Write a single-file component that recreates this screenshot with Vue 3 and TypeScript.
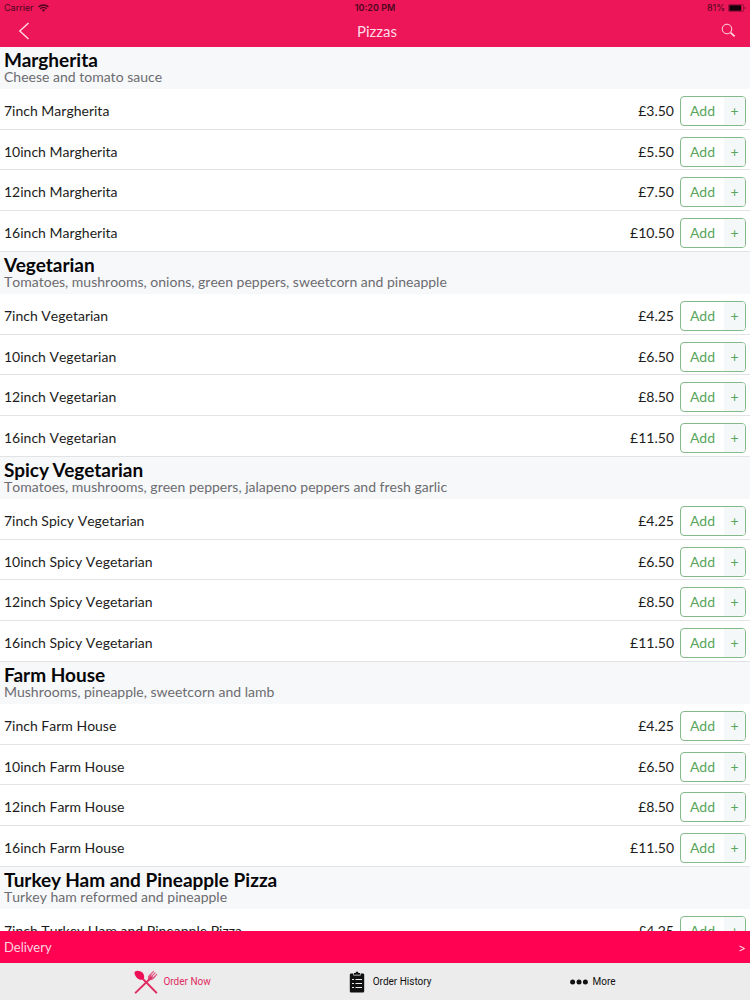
<script setup lang="ts">
interface Item {
  name: string
  price: string
}
interface Section {
  title: string
  description: string
  items: Item[]
}

const sizes = ['7inch', '10inch', '12inch', '16inch']

function section(title: string, description: string, prices: string[]): Section {
  return {
    title,
    description,
    items: prices.map((price, i) => ({ name: `${sizes[i]} ${title}`, price: `£${price}` })),
  }
}

const sections: Section[] = [
  section('Margherita', 'Cheese and tomato sauce', ['3.50', '5.50', '7.50', '10.50']),
  section('Vegetarian', 'Tomatoes, mushrooms, onions, green peppers, sweetcorn and pineapple', ['4.25', '6.50', '8.50', '11.50']),
  section('Spicy Vegetarian', 'Tomatoes, mushrooms, green peppers, jalapeno peppers and fresh garlic', ['4.25', '6.50', '8.50', '11.50']),
  section('Farm House', 'Mushrooms, pineapple, sweetcorn and lamb', ['4.25', '6.50', '8.50', '11.50']),
  {
    title: 'Turkey Ham and Pineapple Pizza',
    description: 'Turkey ham reformed and pineapple',
    items: [{ name: '7inch Turkey Ham and Pineapple Pizza', price: '£4.25' }],
  },
]
</script>

<template>
  <div class="screen">
    <header class="top">
      <div class="status">
        <span class="carrier">
          Carrier
          <svg width="11" height="8" viewBox="0 0 11 8" fill="none" stroke="currentColor" aria-hidden="true">
            <path d="M.6 2.9a7 7 0 0 1 9.8 0M2.3 4.7a4.6 4.6 0 0 1 6.4 0" stroke-width="1.5" />
            <path d="M5.5 7.8 3.8 6.1a2.5 2.5 0 0 1 3.4 0Z" fill="currentColor" stroke="none" />
          </svg>
        </span>
        <span class="time">10:20 PM</span>
        <span class="power">
          81%
          <svg width="18" height="8" viewBox="0 0 18 8" aria-hidden="true">
            <rect x=".4" y=".4" width="15.2" height="7.2" rx="1.5" fill="none" stroke="currentColor" stroke-width=".6" opacity=".6" />
            <rect x="1.3" y="1.2" width="12" height="5.6" rx=".6" fill="currentColor" />
            <path d="M16.6 2.7v2.6q1-.4 1-1.3t-1-1.3Z" fill="currentColor" opacity=".6" />
          </svg>
        </span>
      </div>
      <nav class="bar">
        <button class="icon back" type="button" aria-label="Back">
          <svg width="12" height="18" viewBox="0 0 12 18" fill="none" stroke="currentColor" stroke-width="1.4">
            <path d="M10.5 1 1.8 9l8.7 8" />
          </svg>
        </button>
        <h1>Pizzas</h1>
        <button class="icon search" type="button" aria-label="Search">
          <svg width="15" height="15" viewBox="0 0 15 15" fill="none" stroke="currentColor">
            <circle cx="6" cy="6" r="4.8" stroke-width="1" />
            <path d="m9.6 9.6 4 3.8" stroke-width="1.7" />
          </svg>
        </button>
      </nav>
    </header>

    <main class="menu">
      <section v-for="s in sections" :key="s.title">
        <div class="head">
          <h2>{{ s.title }}</h2>
          <p>{{ s.description }}</p>
        </div>
        <ul>
          <li v-for="item in s.items" :key="item.name">
            <span class="name">{{ item.name }}</span>
            <span class="price">{{ item.price }}</span>
            <button class="add" type="button" :aria-label="`Add ${item.name}`">
              <span class="label">Add</span>
              <span class="plus">+</span>
            </button>
          </li>
        </ul>
      </section>
    </main>

    <button class="delivery" type="button">
      <span>Delivery</span>
      <span class="more">&gt;</span>
    </button>

    <nav class="tabs">
      <a href="#order" class="active" aria-current="page">
        <svg width="24" height="24" viewBox="0 0 24 24" aria-hidden="true">
          <g stroke="currentColor" stroke-width="2" stroke-linecap="round" fill="none">
            <path d="M7.5 7.5 22.3 22.6" />
            <path d="M17 7.8 1.7 22.6" />
          </g>
          <path d="M1 1.4C3-.2 7.4.8 9.2 3.4c1.4 2.2 1.2 4.6.2 5.6s-3.8 1-5.8-.6C1.2 6.4-.4 3 1 1.4Z" fill="#ee1055" />
          <path d="M14.4 9.6c-1-1.8-.6-3.4.6-4.6L19.3.8l.8.7-3 3.6.6.5L21 2.1l.8.8-3.2 3.4.6.6L22.7 3.8l.8.8-3.7 4.2c-1.3 1.2-3 1.9-5.4.8Z" fill="currentColor" opacity=".75" />
        </svg>
        Order Now
      </a>
      <a href="#history">
        <svg class="clip" width="16" height="22" viewBox="0 0 16 22" aria-hidden="true">
          <path d="M2 2.5h2.4v2h7.2v-2H14q1.200 0 1.200 1.200v16.600q0 1.200-1.200 1.200H2q-1.200 0-1.200-1.200V3.700Q.8 2.500 2 2.500Z" fill="currentColor" />
          <path d="M5 3.800V2h1.500q.2-1.600 1.500-1.600T9.500 2H11v1.800Z" fill="currentColor" />
          <path d="M3 8.500h2M3 12.500h2M3 16.500h2M6.500 8.500H13M6.500 12.500H13M6.500 16.500H13" stroke="#ececec" stroke-width="1" />
        </svg>
        Order History
      </a>
      <a href="#more">
        <svg width="18" height="6" viewBox="0 0 18 6" fill="currentColor" aria-hidden="true">
          <circle cx="2.600" cy="3" r="2.500" />
          <circle cx="9" cy="3" r="2.500" />
          <circle cx="15.400" cy="3" r="2.500" />
        </svg>
        More
      </a>
    </nav>
  </div>
</template>

<style>
body {
  margin: 0;
}
</style>

<style scoped>
.screen {
  display: flex;
  flex-direction: column;
  height: 100vh;
  overflow: hidden;
  background: #fff;
  color: #1c1c20;
  font-family: Lato, "Open Sans", sans-serif;
  font-size: 14px;
}
h1,
h2,
p,
ul {
  margin: 0;
  padding: 0;
}
button {
  margin: 0;
  padding: 0;
  border: 0;
  background: none;
  color: inherit;
  font: inherit;
}
svg {
  display: block;
  flex: none;
}
.top {
  flex: none;
  height: 47px;
  background: #ec1658;
}
.status {
  display: grid;
  grid-template-columns: 1fr auto 1fr;
  align-items: center;
  height: 15px;
  padding: 0 4px;
  color: #4c0620;
  font-family: Inter, sans-serif;
  font-size: 9px;
}
.carrier,
.power {
  display: flex;
  align-items: center;
  gap: 4px;
}
.power {
  justify-content: flex-end;
  gap: 3px;
}
.power svg {
  color: #14020a;
}
.time {
  font-weight: 600;
}
.bar {
  display: grid;
  grid-template-columns: 48px 1fr 44px;
  align-items: center;
  height: 31px;
  color: #ffdbe6;
}
.bar h1 {
  text-align: center;
  font-size: 15px;
  font-weight: 400;
  line-height: 20px;
}
.icon {
  display: flex;
  align-items: center;
  justify-content: center;
  height: 31px;
}
.menu {
  flex: 1;
  min-height: 0;
  overflow: hidden;
}
.head {
  box-sizing: border-box;
  height: 42px;
  padding: 3px 4px 0;
  background: #f7f8fa;
}
h2 {
  color: #060608;
  font-size: 19px;
  font-weight: 700;
  line-height: 20px;
}
.head p {
  color: #6c6c70;
  font-size: 14px;
  line-height: 14px;
}
.head p,
.name,
.bar h1 {
  font-kerning: none;
}
ul {
  list-style: none;
}
li {
  box-sizing: border-box;
  display: flex;
  align-items: flex-start;
  height: 41px;
  padding: 7px 4px 0;
  border-bottom: 1px solid #e2e3e5;
  line-height: 30px;
}
li:nth-child(2) {
  height: 40px;
}
.name {
  flex: 1;
}
.price {
  margin-right: 6px;
}
.add {
  box-sizing: border-box;
  display: flex;
  width: 66px;
  height: 30px;
  overflow: hidden;
  border: 1px solid #84b98a;
  border-radius: 4px;
  color: #58a65c;
  line-height: 28px;
}
.label {
  width: 43px;
}
.plus {
  flex: 1;
  background: #f5f8f8;
  text-align: center;
}
.delivery {
  flex: none;
  display: flex;
  align-items: center;
  justify-content: space-between;
  height: 32px;
  padding: 0 4px;
  background: #ff0352;
  color: #ffd3e0;
  font-size: 13px;
}
.more {
  font-size: 14px;
}
.tabs {
  flex: none;
  display: flex;
  justify-content: center;
  gap: 138px;
  height: 37px;
  background: #ececec;
  font-family: Roboto, sans-serif;
  font-size: 10px;
}
.tabs a {
  display: flex;
  align-items: center;
  gap: 5px;
  color: #111;
  text-decoration: none;
}
.tabs .clip {
  margin-right: 3px;
}
.tabs .active {
  color: #df2c62;
}
</style>
